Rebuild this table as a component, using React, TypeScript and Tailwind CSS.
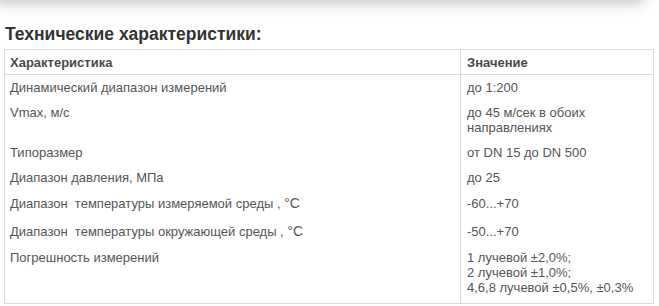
import React from "react";

type Row = { k: React.ReactNode; v: React.ReactNode; cls: string };

const rows: Row[] = [
  { k: "Динамический диапазон измерений", v: "до 1:200", cls: "pt-[5px] pb-[5px]" },
  {
    k: "Vmax, м/с",
    v: (
      <>
        до 45 м/сек в обоих
        <br />
        направлениях
      </>
    ),
    cls: "pt-[5px] pb-[5px]",
  },
  { k: "Типоразмер", v: "от DN 15 до DN 500", cls: "pt-[5px] pb-[5px]" },
  { k: "Диапазон давления, МПа", v: "до 25", cls: "pt-[5px] pb-[5px]" },
  {
    k: (
      <>
        Диапазон&nbsp; температуры измеряемой среды , <span className="text-[14px]">°C</span>
      </>
    ),
    v: "-60...+70",
    cls: "pt-[6px] pb-[6px]",
  },
  {
    k: (
      <>
        Диапазон&nbsp; температуры окружающей среды , <span className="text-[14px]">°C</span>
      </>
    ),
    v: "-50...+70",
    cls: "pt-[7px] pb-[6px]",
  },
  {
    k: "Погрешность измерений",
    v: (
      <>
        1 лучевой ±2,0%;
        <br />2 лучевой ±1,0%;
        <br />
        4,6,8 лучевой ±0,5%, ±0,3%
      </>
    ),
    cls: "pt-[5px] pb-[8px]",
  },
];

export default function App() {
  return (
    <div className="w-[659px] h-[306px] overflow-hidden bg-white font-['Liberation_Sans',Arial,sans-serif]">
      <div className="-mt-[22px] h-[20px] -ml-[10px] mr-[12px] rounded-b-[12px] bg-white shadow-[0_5px_14px_rgba(40,40,70,0.28)]" />
      <div className="pl-[5px] pr-[5px] pt-[26px]">
        <h2 className="text-[17.5px] leading-[21px] font-bold text-[#333]">Технические характеристики:</h2>
        <div className="mt-[4px] ml-[-1px] mr-[0px] border border-[#dcdcdc] text-[13px] leading-[15px]">
          <div className="flex border-b border-[#dcdcdc] font-bold text-[#4a4a4a] h-[25px] items-center">
            <div className="w-[455px] pl-[5px]">Характеристика</div>
            <div className="flex-1 self-stretch flex items-center border-l border-[#dcdcdc] pl-[6px]">Значение</div>
          </div>
          {rows.map((r, i) => (
            <div key={i} className="flex text-[#555]">
              <div className={`w-[455px] pl-[5px] ${r.cls}`}>{r.k}</div>
              <div className={`flex-1 border-l border-[#dcdcdc] pl-[6px] ${r.cls}`}>{r.v}</div>
            </div>
          ))}
        </div>
      </div>
    </div>
  );
}
